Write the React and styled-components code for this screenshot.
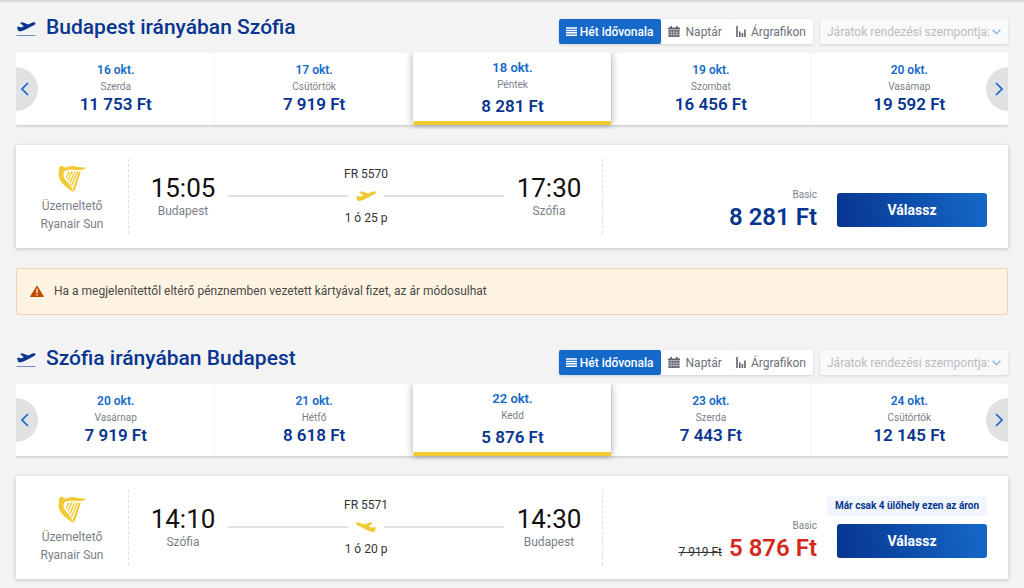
import React from 'react';
import styled, { createGlobalStyle } from 'styled-components';

const flights = [
  {
    id: 'out',
    title: 'Budapest irányában Szófia',
    days: [
      { date: '16 okt.', day: 'Szerda', price: '11 753 Ft' },
      { date: '17 okt.', day: 'Csütörtök', price: '7 919 Ft' },
      { date: '18 okt.', day: 'Péntek', price: '8 281 Ft', active: true },
      { date: '19 okt.', day: 'Szombat', price: '16 456 Ft' },
      { date: '20 okt.', day: 'Vasárnap', price: '19 592 Ft' },
    ],
    from: { time: '15:05', city: 'Budapest' },
    to: { time: '17:30', city: 'Szófia' },
    number: 'FR 5570',
    duration: '1 ó 25 p',
    price: '8 281 Ft',
  },
  {
    id: 'back',
    title: 'Szófia irányában Budapest',
    days: [
      { date: '20 okt.', day: 'Vasárnap', price: '7 919 Ft' },
      { date: '21 okt.', day: 'Hétfő', price: '8 618 Ft' },
      { date: '22 okt.', day: 'Kedd', price: '5 876 Ft', active: true },
      { date: '23 okt.', day: 'Szerda', price: '7 443 Ft' },
      { date: '24 okt.', day: 'Csütörtök', price: '12 145 Ft' },
    ],
    from: { time: '14:10', city: 'Szófia' },
    to: { time: '14:30', city: 'Budapest' },
    number: 'FR 5571',
    duration: '1 ó 20 p',
    price: '5 876 Ft',
    oldPrice: '7 919 Ft',
    seats: 'Már csak 4 ülőhely ezen az áron',
    inbound: true,
  },
];

const PLANE = 'M0.1 5.6L1.6 4.9L4 5.8L7.4 4.6L3.2 1.2L5.6 0.2L12.2 2.6L16 0.9C17.8 0.1 19.6 0.2 19.9 1.2C20.1 2.3 18.8 3.2 17.4 3.8L9.8 7.7C7.2 9.1 4.4 10.1 2.4 10C1.2 9.8 0.5 7.6 0.1 5.6Z';

const Plane = ({ flip }) => (
  <svg width="20" height="10" viewBox="0 0 20 10" aria-hidden="true">
    <path d={PLANE} fill="#f1c933" transform={flip ? 'translate(20 0) scale(-1 1)' : undefined} />
  </svg>
);

const TakeOff = () => (
  <svg width="20" height="20" viewBox="0 -4 20 20" aria-hidden="true">
    <path d={PLANE} fill="#073590" transform="translate(1 1) scale(.93)" />
    <path d="M0.5 14.5H19.5" stroke="#6d8ac0" />
  </svg>
);

const Harp = () => (
  <svg width="28" height="28" viewBox="0 0 28 28" aria-hidden="true">
    <path
      d="M2.4 1.2C3.8 .2 5.6 .9 5.7 2.3C8.8 3.2 11.3 .6 15.2 1.1C19.3 1.7 22.3 3.4 27.6 2.2C26.6 5.4 22.4 5.2 18.4 4.9C14.4 4.5 10.6 4.4 6.6 6C4.6 9.6 5.4 12.8 8.6 16.2C11.6 19.2 14.6 22.6 16 27.6C11.5 24.3 5.8 21 2.8 16.3C.4 12.4 0 8.2 1.4 5C.2 4.6 .8 2 2.4 1.2Z"
      fill="#f1c933"
    />
    <path d="M20.9 6.8L22.8 6.8L16.4 26.5L14.9 23.6Z" fill="#f1c933" />
    <path
      d="M10.8 7L8.6 12.2M13.8 6.8L10.2 15M16.8 6.8L12 17.6M19.6 6.8L13.6 20.4"
      stroke="#f1c933"
      strokeWidth="1.4"
      strokeLinecap="round"
    />
  </svg>
);

const Chevron = ({ right }) => (
  <svg width="8" height="14" viewBox="0 0 8 14" aria-hidden="true">
    <path d={right ? 'M1 1L7 7L1 13' : 'M7 1L1 7L7 13'} fill="none" stroke="#1569c9" strokeWidth="1.7" />
  </svg>
);

const ListIcon = () => (
  <svg width="11" height="9" viewBox="0 0 11 9" aria-hidden="true">
    <path d="M0 1H11M0 3.4H11M0 5.8H11M0 8.2H11" stroke="#fff" strokeWidth="1.5" />
  </svg>
);

const CalendarIcon = () => (
  <svg width="12" height="11" viewBox="0 0 12 11" aria-hidden="true">
    <path d="M0 1.5H12V3.6H0ZM.5 4H11.5V11H.5ZM2.3 0H4V2H2.3ZM8 0H9.7V2H8Z" fill="#5f636c" />
    <path d="M.8 6.2H11.2M.8 8.4H11.2M3.2 4.3V10.5M6 4.3V10.5M8.8 4.3V10.5" stroke="#d4d5d8" strokeWidth=".6" />
  </svg>
);

const ChartIcon = () => (
  <svg width="10" height="11" viewBox="0 0 10 11" aria-hidden="true">
    <path d="M1 0V11M3.8 5.5V11M6.4 7V11M9 3.5V11" stroke="#5f636c" strokeWidth="1.6" />
  </svg>
);

const Warning = () => (
  <svg width="14" height="12" viewBox="0 0 14 12" aria-hidden="true">
    <path d="M7 .2L13.8 11.2Q14 12 13.2 12H.8Q0 12 .2 11.2Z" fill="#c54b00" />
    <path d="M7 3.8V8M7 9V10.4" stroke="#fff4e4" strokeWidth="1.4" />
  </svg>
);

const FlightSection = ({ flight }) => (
  <section>
    <Header>
      <Title>
        <TakeOff />
        {flight.title}
      </Title>
      <Tools>
        <Tabs>
          <Tab type="button" $active>
            <ListIcon />
            Hét idővonala
          </Tab>
          <Tab type="button" $gap="6px">
            <CalendarIcon />
            Naptár
          </Tab>
          <Tab type="button" $gap="5px">
            <ChartIcon />
            Árgrafikon
          </Tab>
        </Tabs>
        <SortBox>
          <select aria-label="Járatok rendezési szempontja" id={`sort-${flight.id}`}>
            <option>Járatok rendezési szempontja:</option>
          </select>
          <svg width="9" height="6" viewBox="0 0 9 6" aria-hidden="true">
            <path d="M.6 .8L4.5 4.7L8.4 .8" fill="none" stroke="#83b2e4" strokeWidth="1.3" />
          </svg>
        </SortBox>
      </Tools>
    </Header>
    <Carousel>
      {flight.days.map((item) => (
        <Day type="button" key={item.date} $active={item.active}>
          <b>{item.date}</b>
          <small>{item.day}</small>
          <strong>{item.price}</strong>
        </Day>
      ))}
      <Arrow type="button" aria-label="Előző">
        <Chevron />
      </Arrow>
      <Arrow type="button" aria-label="Következő" $right>
        <Chevron right />
      </Arrow>
    </Carousel>
    <Card>
      <Operator>
        <Harp />
        <p>Üzemeltető<br />Ryanair Sun</p>
      </Operator>
      <Route>
        <Stop>
          <strong>{flight.from.time}</strong>
          <span>{flight.from.city}</span>
        </Stop>
        <Leg>
          <span>{flight.number}</span>
          <Track>
            <Plane flip={flight.inbound} />
          </Track>
          <span>{flight.duration}</span>
        </Leg>
        <Stop>
          <strong>{flight.to.time}</strong>
          <span>{flight.to.city}</span>
        </Stop>
      </Route>
      <Fare>
        <Price $sale={!!flight.oldPrice}>
          <small>Basic</small>
          <div>
            {flight.oldPrice && <del>{flight.oldPrice}</del>}
            <strong>{flight.price}</strong>
          </div>
        </Price>
        <Action>
          {flight.seats && <Seats>{flight.seats}</Seats>}
          <Select type="button">Válassz</Select>
        </Action>
      </Fare>
    </Card>
  </section>
);

const App = () => (
  <>
    <GlobalStyle />
    <Page>
      <FlightSection flight={flights[0]} />
      <Notice>
        <Warning />
        Ha a megjelenítettől eltérő pénznemben vezetett kártyával fizet, az ár módosulhat
      </Notice>
      <FlightSection flight={flights[1]} />
    </Page>
  </>
);

const GlobalStyle = createGlobalStyle`
  * {
    box-sizing: border-box;
  }
  body {
    margin: 0;
    background: #f3f3f3;
    font-family: Roboto, "Liberation Sans", sans-serif;
  }
  button, select {
    font-family: inherit;
  }
  svg {
    display: block;
    flex-shrink: 0;
  }
`;

const Page = styled.main`
  border-top: 2px solid #d9dbdb;
  padding: 8px 16px;
`;

const Header = styled.header`
  display: flex;
  justify-content: space-between;
  align-items: center;
  height: 43px;
`;

const Title = styled.h2`
  display: flex;
  align-items: center;
  gap: 10px;
  margin: 0;
  padding-bottom: 9px;
  color: #073590;
  font-size: 21px;
  line-height: 24px;
  font-weight: 500;
`;

const Tools = styled.div`
  display: flex;
  gap: 7px;
`;

const Tabs = styled.div`
  display: flex;
  border-radius: 2px;
  box-shadow: 0 1px 3px rgba(0, 0, 0, .14);
`;

const Tab = styled.button`
  display: flex;
  align-items: center;
  gap: ${({ $gap }) => $gap || '3px'};
  height: 25px;
  padding: 0 7px;
  border: 0;
  border-radius: 2px;
  background: ${({ $active }) => ($active ? '#1569c9' : '#fff')};
  color: ${({ $active }) => ($active ? '#fff' : '#6c717b')};
  font-size: 12px;
  font-weight: ${({ $active }) => ($active ? 500 : 400)};
  white-space: nowrap;
`;

const SortBox = styled.div`
  display: flex;
  align-items: center;
  gap: 2px;
  height: 25px;
  padding: 0 7px;
  border-radius: 2px;
  background: #f9f9f9;
  box-shadow: 0 1px 3px rgba(0, 0, 0, .14);
  select {
    appearance: none;
    padding: 0;
    border: 0;
    background: none;
    color: #b9bcc1;
    font-size: 12px;
  }
`;

const Carousel = styled.div`
  position: relative;
  display: grid;
  grid-template-columns: repeat(5, 1fr);
  height: 72px;
  background: #fff;
  box-shadow: 0 1px 3px rgba(0, 0, 0, .2);
  clip-path: inset(0 0 -4px 0);
`;

const Day = styled.button`
  display: flex;
  flex-direction: column;
  align-items: center;
  position: relative;
  z-index: ${({ $active }) => ($active ? 1 : 0)};
  padding: ${({ $active }) => ($active ? '7px 0 0' : '9px 0 0')};
  border: 0;
  border-left: 1px solid ${({ $active }) => ($active ? '#fff' : '#f3f3f3')};
  border-bottom: ${({ $active }) => ($active ? '4px solid #f1c933' : '0')};
  background: #fff;
  box-shadow: ${({ $active }) => ($active ? '0 0 8px rgba(0, 0, 0, .35)' : 'none')};
  &:first-child {
    border-left-color: #fff;
  }
  b {
    color: #1569c9;
    font-size: ${({ $active }) => ($active ? '13px' : '12px')};
    line-height: 16px;
    font-weight: 600;
  }
  small {
    color: #7b7f88;
    font-size: 10px;
    line-height: 17px;
  }
  strong {
    padding-top: ${({ $active }) => ($active ? '4px' : '0')};
    color: #073590;
    font-size: 17px;
    line-height: 18px;
    font-weight: 600;
  }
`;

const Arrow = styled.button`
  position: absolute;
  z-index: 2;
  top: 14px;
  ${({ $right }) => ($right ? 'right: 0;' : 'left: 0;')}
  display: flex;
  align-items: center;
  justify-content: ${({ $right }) => ($right ? 'flex-end' : 'flex-start')};
  width: 22px;
  height: 44px;
  padding: 0 5px;
  border: 0;
  border-radius: ${({ $right }) => ($right ? '22px 0 0 22px' : '0 22px 22px 0')};
  background: #dfe1e3;
`;

const Card = styled.article`
  display: flex;
  margin-top: 20px;
  padding: 14px 21px 14px 0;
  background: #fff;
  box-shadow: 0 1px 4px rgba(0, 0, 0, .2);
`;

const Operator = styled.div`
  display: flex;
  flex-direction: column;
  align-items: center;
  width: 113px;
  height: 75px;
  padding-top: 6px;
  border-right: 1px dashed #dcdee0;
  p {
    margin: 4px 0 0;
    color: #7b7f88;
    font-size: 12px;
    line-height: 18px;
    text-align: center;
  }
`;

const Route = styled.div`
  display: flex;
  flex: 434;
  padding: 0 19px 0 20px;
  border-right: 1px dashed #dcdee0;
`;

const Stop = styled.div`
  display: flex;
  flex-direction: column;
  align-items: center;
  width: 68px;
  padding-top: 14px;
  strong {
    color: #111;
    font-size: 26px;
    line-height: 30px;
    font-weight: 400;
  }
  span {
    color: #7b7f88;
    font-size: 12px;
    line-height: 16px;
  }
`;

const Leg = styled.div`
  display: flex;
  flex: 1;
  flex-direction: column;
  align-items: center;
  padding: 6px 11px 0;
  color: #333;
  font-size: 12px;
  line-height: 18px;
`;

const Track = styled.div`
  display: flex;
  align-items: center;
  gap: 8px;
  width: 100%;
  height: 26px;
  &::before, &::after {
    content: '';
    flex: 1;
    height: 2px;
    background: #e0e1e3;
  }
`;

const Fare = styled.div`
  display: flex;
  flex: 384;
  justify-content: flex-end;
  gap: 20px;
`;

const Price = styled.div`
  padding-top: 28px;
  text-align: right;
  small {
    display: block;
    color: #7b7f88;
    font-size: 10px;
    line-height: 16px;
  }
  strong {
    color: ${({ $sale }) => ($sale ? '#d4291c' : '#073590')};
    font-size: 24px;
    line-height: 28px;
    font-weight: 600;
  }
  del {
    margin-right: 7px;
    color: #333;
    font-size: 12px;
  }
`;

const Action = styled.div`
  display: flex;
  flex-direction: column;
  align-items: flex-end;
  justify-content: flex-end;
  gap: 8px;
  width: 150px;
  padding-bottom: 7px;
`;

const Seats = styled.span`
  padding: 2px 8px;
  border-radius: 3px;
  background: #f1f6fc;
  color: #073590;
  font-size: 10px;
  line-height: 16px;
  font-weight: 700;
  white-space: nowrap;
`;

const Select = styled.button`
  width: 100%;
  height: 34px;
  border: 0;
  border-radius: 3px;
  background: linear-gradient(80deg, #073590, #1569c9);
  color: #fff;
  font-size: 14px;
  font-weight: 700;
`;

const Notice = styled.aside`
  display: flex;
  align-items: center;
  gap: 10px;
  height: 47px;
  margin: 20px 0 26px;
  padding: 0 13px 2px;
  border: 1px solid #f3d2b0;
  border-radius: 2px;
  background: #fff4e4;
  color: #4b4843;
  font-size: 12px;
`;

export default App;
